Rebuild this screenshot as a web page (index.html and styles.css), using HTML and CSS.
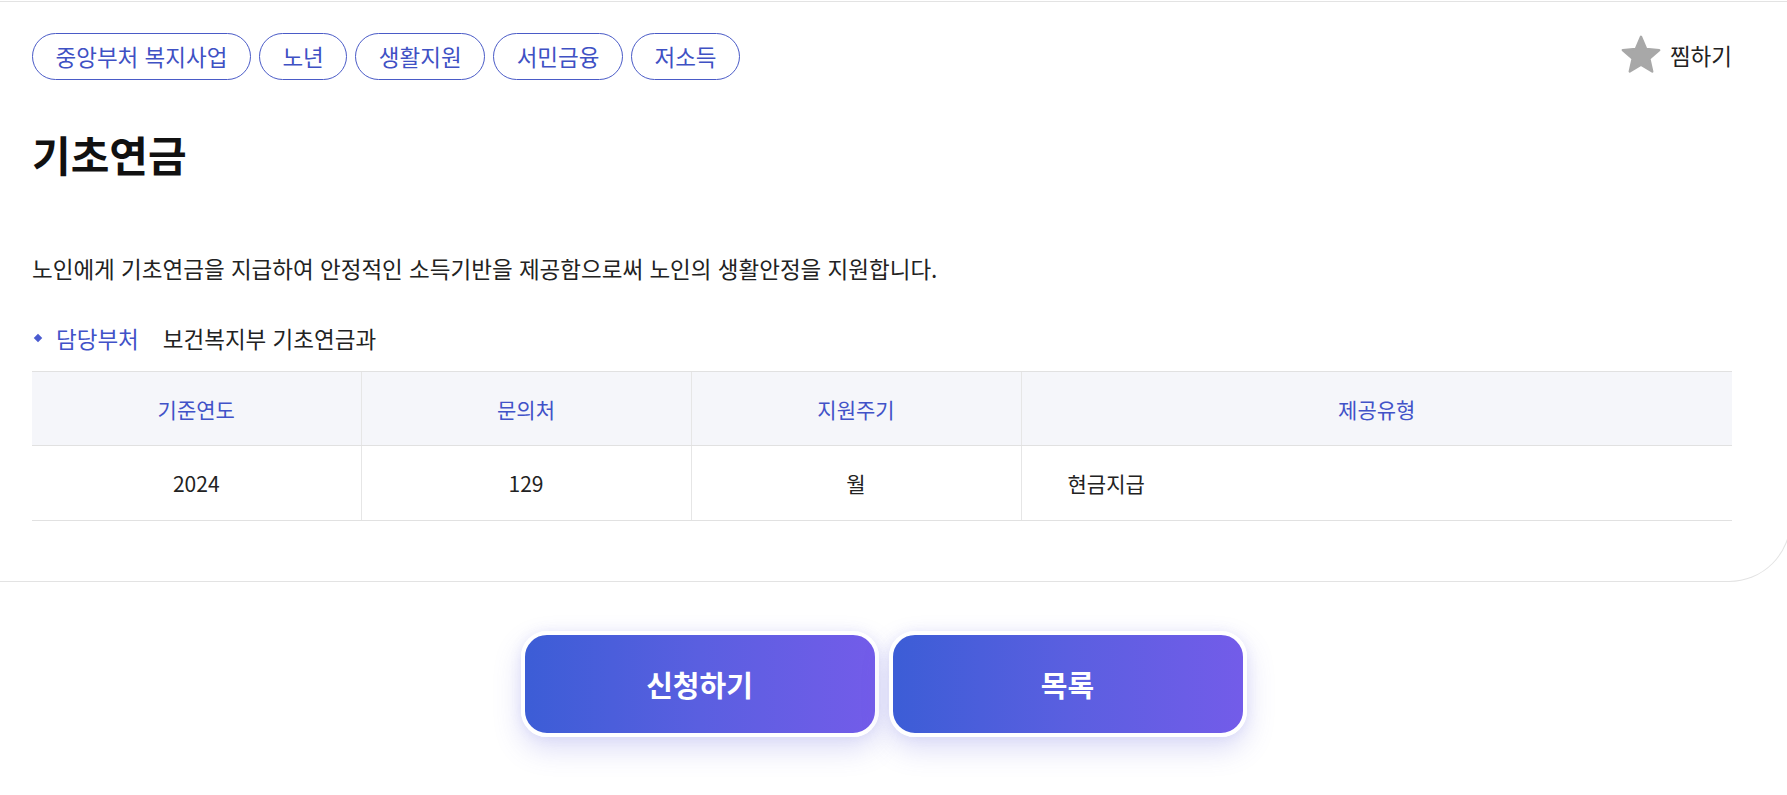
FILE: index.html
```html
<!DOCTYPE html>
<html lang="ko">
<head>
<meta charset="utf-8">
<title>기초연금</title>
<link rel="stylesheet" href="styles.css">
</head>
<body>
<div class="card-wrap">
<section class="card">
  <div class="top-row">
    <ul class="tags">
      <li class="tag">중앙부처 복지사업</li>
      <li class="tag">노년</li>
      <li class="tag">생활지원</li>
      <li class="tag">서민금융</li>
      <li class="tag">저소득</li>
    </ul>
    <button class="fav" type="button">
      <svg class="star" viewBox="0 0 24 24" width="40" height="40" aria-hidden="true">
        <path d="M12 1.1L15.12 8.31L22.94 9.05L17.04 14.24L18.76 21.9L12 17.9L5.24 21.9L6.96 14.24L1.06 9.05L8.88 8.31Z" fill="#a8a8a8" stroke="#a8a8a8" stroke-width="1.4" stroke-linejoin="round"/>
      </svg>
      <span>찜하기</span>
    </button>
  </div>
  <h1 class="title">기초연금</h1>
  <p class="desc">노인에게 기초연금을 지급하여 안정적인 소득기반을 제공함으로써 노인의 생활안정을 지원합니다.</p>
  <div class="dept">
    <span class="dept-label">담당부처</span>
    <span class="dept-value">보건복지부 기초연금과</span>
  </div>
  <table class="info">
    <colgroup>
      <col class="c1"><col class="c2"><col class="c3"><col class="c4">
    </colgroup>
    <thead>
      <tr><th>기준연도</th><th>문의처</th><th>지원주기</th><th>제공유형</th></tr>
    </thead>
    <tbody>
      <tr><td>2024</td><td>129</td><td>월</td><td class="left">현금지급</td></tr>
    </tbody>
  </table>
</section>
</div>
<div class="actions">
  <a class="btn" href="#">신청하기</a>
  <a class="btn" href="#">목록</a>
</div>
</body>
</html>
```
FILE: styles.css
```css
body {
  margin: 0;
  padding-bottom: 50px;
  background: #fff;
  font-family: "Noto Sans CJK KR", "Noto Sans", sans-serif;
  color: #222;
  font-size: 22.5px;
}
.card-wrap {
  overflow: hidden;
  padding-top: 1px;
}
.card {
  margin-right: -4px;
  border-top: 1px solid #e3e3e3;
  border-bottom: 1px solid #e3e3e3;
  border-right: 1px solid #e3e3e3;
  border-bottom-right-radius: 62px;
  padding: 31px 58px 60px 32px;
}
.top-row {
  display: flex;
  align-items: center;
  justify-content: space-between;
  height: 47px;
}
.tags {
  display: flex;
  gap: 8px;
  list-style: none;
  margin: 0;
  padding: 0;
}
.tag {
  box-sizing: border-box;
  height: 47px;
  line-height: 45px;
  padding: 0 22.5px;
  border: 1px solid #4a5bc7;
  border-radius: 24px;
  color: #3f51c4;
  font-size: 22.5px;
  white-space: nowrap;
}
.fav {
  display: flex;
  align-items: center;
  gap: 9px;
  background: none;
  border: 0;
  padding: 0;
  font-family: inherit;
  font-size: 22.5px;
  color: #222;
  cursor: pointer;
  margin-top: -3px;
}
.star { display: block; }
.title {
  margin: 49px 0 0;
  font-size: 42px;
  line-height: 50px;
  font-weight: 700;
  color: #111;
}
.desc {
  margin: 74px 0 0;
  line-height: 30px;
}
.dept {
  margin-top: 40px;
  display: flex;
  align-items: center;
  line-height: 30px;
}
.dept-label {
  display: flex;
  align-items: center;
  color: #4152c8;
  margin-right: 24px;
}
.dept-label::before {
  content: "";
  width: 6px;
  height: 6px;
  background: #4a5bd0;
  transform: rotate(45deg);
  margin: 0 15px 0 3px;
}
.info {
  margin-top: 18px;
  width: 100%;
  border-collapse: collapse;
  table-layout: fixed;
}
.info .c1 { width: 329px; }
.info .c2 { width: 330px; }
.info .c3 { width: 330px; }
.info th, .info td {
  border-top: 1px solid #e1e1e1;
  border-bottom: 1px solid #e1e1e1;
  border-left: 1px solid #e6e6e6;
  text-align: center;
  padding: 0;
}
.info th:first-child, .info td:first-child { border-left: 0; }
.info th {
  height: 73px;
  background: #f5f6fa;
  color: #4152c8;
  font-weight: 400;
  font-size: 21px;
}
.info td {
  height: 74px;
  font-size: 21px;
  color: #222;
}
.info td.left {
  text-align: left;
  padding-left: 46px;
}
.actions {
  display: flex;
  justify-content: center;
  gap: 10px;
  margin-top: 49px;
  padding-right: 20px;
}
.btn {
  box-sizing: border-box;
  width: 358px;
  height: 106px;
  border: 4px solid #fff;
  border-radius: 26px;
  background: linear-gradient(90deg, #3c5dd6 0%, #5a5fe0 50%, #735ce9 100%);
  box-shadow: 0 12px 28px rgba(96, 96, 220, 0.22), 0 0 12px rgba(120, 120, 230, 0.12);
  color: #fff;
  font-size: 29px;
  font-weight: 700;
  text-decoration: none;
  display: flex;
  align-items: center;
  justify-content: center;
}
```
